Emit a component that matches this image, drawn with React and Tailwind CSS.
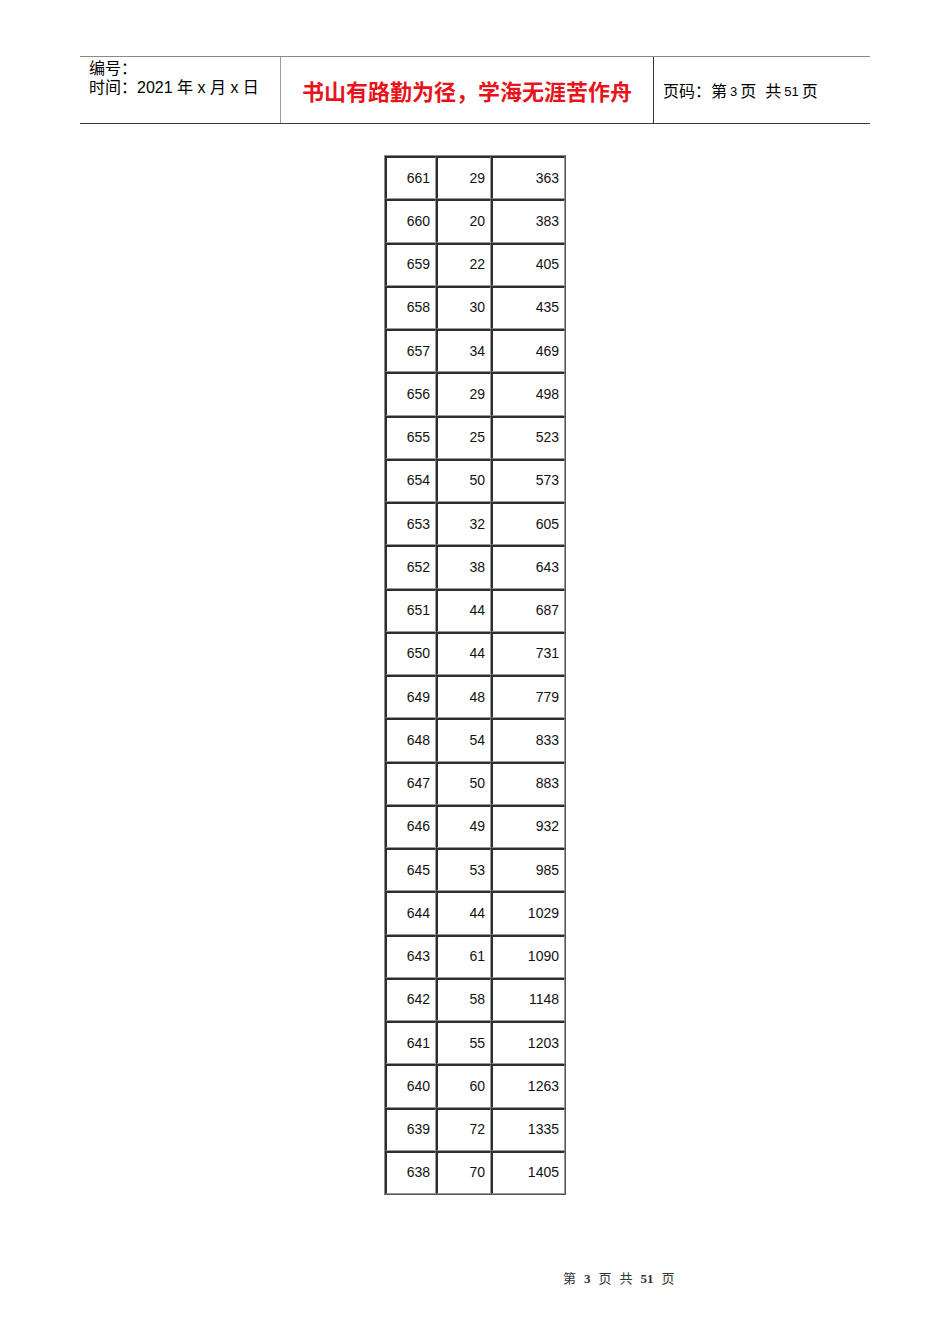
const rows = [
  [661, 29, 363],
  [660, 20, 383],
  [659, 22, 405],
  [658, 30, 435],
  [657, 34, 469],
  [656, 29, 498],
  [655, 25, 523],
  [654, 50, 573],
  [653, 32, 605],
  [652, 38, 643],
  [651, 44, 687],
  [650, 44, 731],
  [649, 48, 779],
  [648, 54, 833],
  [647, 50, 883],
  [646, 49, 932],
  [645, 53, 985],
  [644, 44, 1029],
  [643, 61, 1090],
  [642, 58, 1148],
  [641, 55, 1203],
  [640, 60, 1263],
  [639, 72, 1335],
  [638, 70, 1405],
];

const cjk = "font-['Liberation_Sans','Noto_Sans_CJK_SC',sans-serif]";
const cell =
  "border-t-2 border-l-2 border-r border-b border-t-[#2e2e2e] border-l-[#2e2e2e] border-r-[#9a9a9a] border-b-[#9a9a9a] pr-[5px] text-right";

function Header() {
  return (
    <div className={`mx-[80px] mt-[56px] flex h-[68px] border-t border-b border-t-[#8a8a8a] border-b-[#3a3a3a] ${cjk}`}>
      <div className="w-[201px] border-r border-[#9a9a9a] pl-[9px] pt-[2px] text-[16px] leading-[19px] text-black">
        <div>编号：</div>
        <div>时间：2021 年 x 月 x 日</div>
      </div>
      <div className="flex w-[373px] items-center justify-center border-r border-[#333] pt-[4px] text-[22px] font-semibold text-[#e8141c]">
        书山有路勤为径，学海无涯苦作舟
      </div>
      <div className="flex flex-1 items-center pl-[9px] pt-[3px] text-[16px] text-black">
        页码：第 <span className="mx-[3px] text-[13px]">3</span>页&nbsp;&nbsp;共<span className="mx-[3px] text-[13px]">51</span>页
      </div>
    </div>
  );
}

function NumberTable() {
  return (
    <div className="mt-[31px] flex justify-center">
      <table className="border-separate border-spacing-0 border border-t-[#8a8a8a] border-l-[#8a8a8a] border-r-[#555] border-b-[#555] font-['Liberation_Sans',sans-serif] text-[14px] text-[#111]">
        <tbody>
          {rows.map((r) => (
            <tr key={r[0]} className="h-[43.25px]">
              <td className={`w-[51px] ${cell}`}>{r[0]}</td>
              <td className={`w-[55px] ${cell}`}>{r[1]}</td>
              <td className={`w-[74px] ${cell}`}>{r[2]}</td>
            </tr>
          ))}
        </tbody>
      </table>
    </div>
  );
}

export default function App() {
  return (
    <div className="h-[1344px] w-[950px] bg-white">
      <Header />
      <NumberTable />
      <div className="mt-[75px] flex gap-[8px] pl-[563px] font-['Liberation_Serif','Noto_Sans_CJK_SC',serif] text-[13px] leading-[18px] text-[#333]">
        <span>第</span>
        <span className="font-bold">3</span>
        <span>页</span>
        <span>共</span>
        <span className="font-bold">51</span>
        <span>页</span>
      </div>
    </div>
  );
}
